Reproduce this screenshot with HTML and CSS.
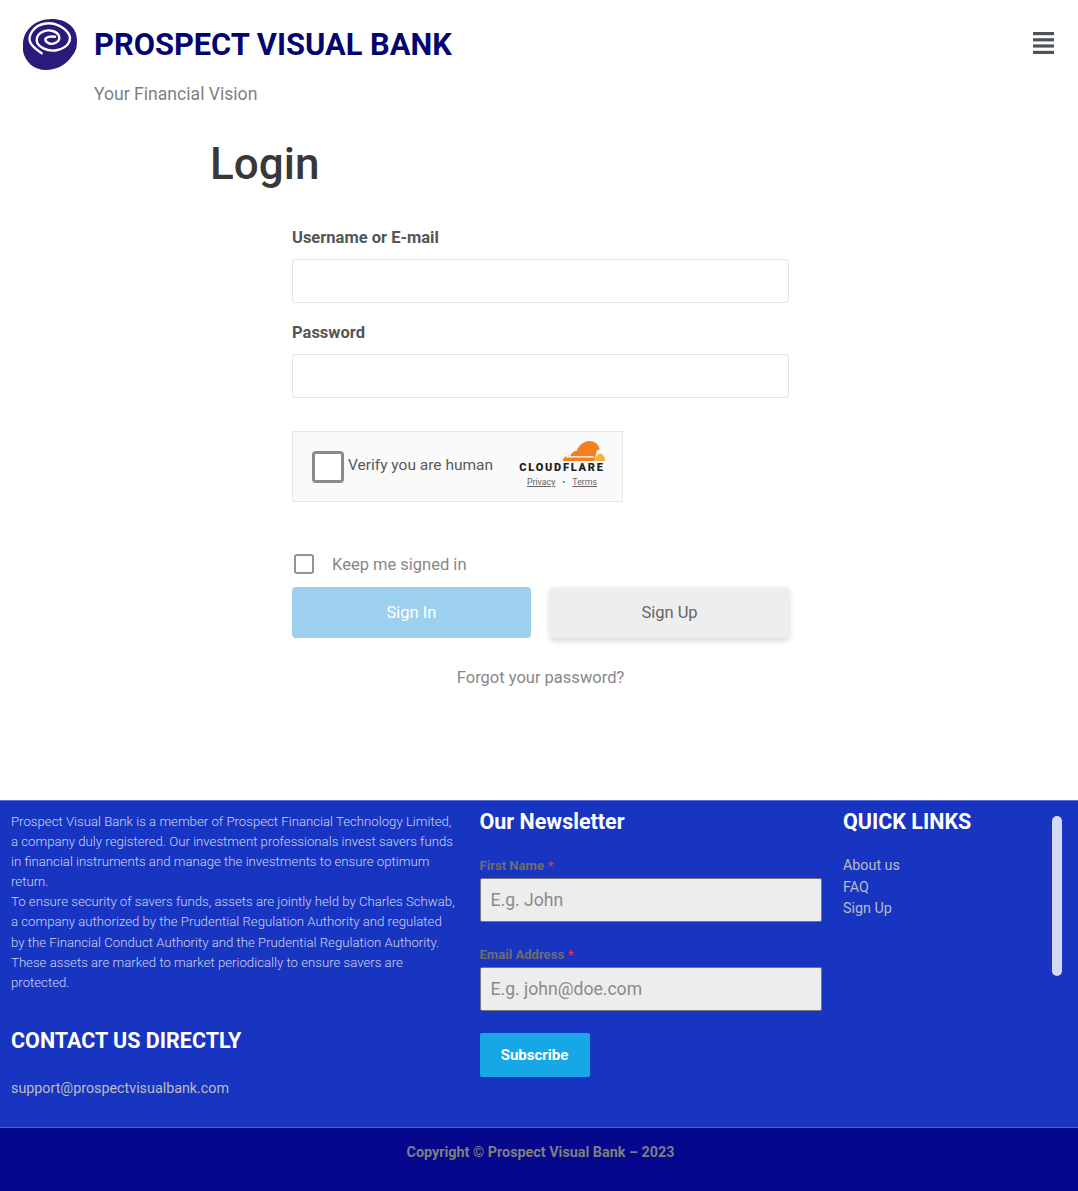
FILE: index.html
```html
<!doctype html>
<html lang="en">
<head>
  <meta charset="utf-8" />
  <meta name="viewport" content="width=device-width,initial-scale=1" />
  <title>Login - Prospect Visual Bank</title>
  <link rel="stylesheet" href="styles.css">
</head>
<body>
  <!-- Header -->
  <header class="site-header">
    <div class="brand">
      <div class="brand-row">
        <svg class="brand-logo" viewBox="0 0 56 52" aria-hidden="true">
          <path d="M1 27C1 12 13 1 30 1c15 0 25 9 25 21 0 8-1 11-5 16-6 9-16 14-26 14C12 52 3 44 1 33z" fill="#2a1a7c"/>
          <path d="M33 18.700Q26.300 18 24.200 20Q22 22 25.400 24.500Q28.700 27 33.400 24.900Q38 22.700 37.200 18.700Q36.300 14.700 30.500 13Q24.700 11.300 19.700 14.200Q14.700 17 14.700 22Q14.700 27 21.400 30.400Q28 33.700 35.500 32Q43 30.300 46.400 25.300Q49.700 20.300 46.400 15.300Q43 10.300 36.400 7.300Q29.700 4.300 22.200 5.700Q14.700 7 10.500 12.900Q6.300 18.700 8 23.700Q9.700 28.700 19.700 35.300" fill="none" stroke="#fff" stroke-width="2.400" stroke-linecap="round"/>
        </svg>
        <div class="brand-name">PROSPECT VISUAL BANK</div>
      </div>
      <div class="brand-tag">Your Financial Vision</div>
    </div>
    <svg class="menu-icon" viewBox="0 0 21 22" aria-hidden="true">
      <rect x="0" y="0" width="21" height="3.200"/>
      <rect x="0" y="6.200" width="21" height="3.200"/>
      <rect x="0" y="12.400" width="21" height="3.200"/>
      <rect x="0" y="18.800" width="21" height="3.200"/>
    </svg>
  </header>

  <!-- Login -->
  <main class="login">
    <h1>Login</h1>
    <form class="login-form">
      <label class="field-label" for="user">Username or E-mail</label>
      <input class="field" type="text" id="user">
      <label class="field-label" for="pass">Password</label>
      <input class="field" type="password" id="pass">

      <div class="turnstile">
        <span class="ts-box"></span>
        <span class="ts-text">Verify you are human</span>
        <div class="ts-brand">
          <svg class="ts-cloud" viewBox="0 0 40 20" aria-hidden="true">
            <path d="M0 19c0-3 2-5 5-5 1 0 2 0 2 .5C8 11 11 9 13 9.500 15 4 20 0 25 0c5 0 9 3 10 8-1 0-3 1-3 2L30 19z" fill="#f38020"/>
            <path d="M30 19c.5-3 2-6 5-7 3 0 5 3 5 7z" fill="#faae40"/>
            <path d="M2 14.500h27l1 1.200H3z" fill="#fff"/>
          </svg>
          <div class="ts-name">CLOUDFLARE</div>
          <div class="ts-links"><u>Privacy</u><span>•</span><u>Terms</u></div>
        </div>
      </div>

      <label class="keep"><span class="keep-box"></span>Keep me signed in</label>
      <div class="btn-row">
        <button type="button" class="btn btn-in">Sign In</button>
        <button type="button" class="btn btn-up">Sign Up</button>
      </div>
      <p class="forgot">Forgot your password?</p>
    </form>
  </main>

  <!-- Footer -->
  <footer class="site-footer">
    <div class="foot-main">
      <div class="foot-about">
        <p>Prospect Visual Bank is a member of Prospect Financial Technology Limited, a company duly registered. Our investment professionals invest savers funds in financial instruments and manage the investments to ensure optimum return.<br>To ensure security of savers funds, assets are jointly held by Charles Schwab, a company authorized by the Prudential Regulation Authority and regulated by the Financial Conduct Authority and the Prudential Regulation Authority. These assets are marked to market periodically to ensure savers are protected.</p>
        <h3>CONTACT US DIRECTLY</h3>
        <a class="foot-link" href="#">support@prospectvisualbank.com</a>
      </div>
      <form class="foot-news">
        <h3>Our Newsletter</h3>
        <label for="fname">First Name <em>*</em></label>
        <input type="text" id="fname" placeholder="E.g. John">
        <label for="femail">Email Address <em>*</em></label>
        <input type="text" id="femail" placeholder="E.g. john@doe.com">
        <button type="button" class="subscribe">Subscribe</button>
      </form>
      <div class="foot-quick">
        <h3>QUICK LINKS</h3>
        <ul>
          <li><a class="foot-link" href="#">About us</a></li>
          <li><a class="foot-link" href="#">FAQ</a></li>
          <li><a class="foot-link" href="#">Sign Up</a></li>
        </ul>
      </div>
      <div class="foot-scroll"></div>
    </div>
    <div class="foot-copy">Copyright © Prospect Visual Bank – 2023</div>
  </footer>
</body>
</html>
```

FILE: styles.css
```css
html, body { margin:0; padding:0; }
body { font-family:Roboto, sans-serif; color:#7a7a7a; background:#fff; }
* { box-sizing:border-box; }

/* Header */
.site-header { display:flex; justify-content:space-between; align-items:flex-start; padding:18px 24px 0 22px; height:120px; }
.brand-row { display:flex; align-items:center; gap:16px; height:52px; }
.brand-logo { width:56px; height:52px; display:block; }
.brand-name { font-size:30.850px; font-weight:700; color:#05056f; white-space:nowrap; }
.brand-tag { font-size:17.600px; line-height:21px; margin:14px 0 0 72px; color:#7f7f7f; }
.menu-icon { width:21px; height:22px; margin-top:14px; fill:#4f5358; display:block; }

/* Login */
.login { height:680px; padding:0 0 0 210px; }
.login h1 { margin:0; font-size:44px; font-weight:500; line-height:52px; color:#383838; padding-top:18px; }
.login-form { width:497px; margin:38px 0 0 82px; }
.field-label { display:block; font-size:16.500px; font-weight:700; line-height:19px; color:#555; margin-bottom:12px; }
.field { display:block; width:100%; height:44px; border:1px solid #e3e3e3; border-radius:3px; margin-bottom:20px; background:#fff; }

.turnstile { width:331px; height:71px; margin-top:33px; background:#fafafa; border:1px solid #e6e6e6; display:flex; align-items:center; padding:0 17px 0 19px; }
.ts-box { width:32px; height:32px; border:3px solid #8a8a8a; border-radius:4px; background:#fff; flex:none; }
.ts-text { font-size:15.500px; color:#595959; margin-left:4px; margin-bottom:3px; white-space:nowrap; }
.ts-brand { margin-left:auto; margin-bottom:4px; width:86px; display:flex; flex-direction:column; align-items:center; flex:none; }
.ts-cloud { width:42px; height:21px; align-self:flex-end; }
.ts-name { font-size:11px; font-weight:900; letter-spacing:1.750px; color:#222; line-height:12px; white-space:nowrap; }
.ts-links { font-size:8.800px; color:#666; line-height:11px; margin-top:3px; display:flex; gap:7px; }

.keep { display:flex; align-items:center; font-size:16.500px; line-height:20px; color:#878787; margin-top:53px; }
.keep-box { width:20px; height:20px; border:2px solid #949494; border-radius:3px; margin:-2px 18px 0 2px; flex:none; }
.btn-row { display:flex; gap:19px; margin-top:12px; }
.btn { flex:1; height:51px; border:none; border-radius:4px; font:400 16.500px Roboto, sans-serif; }
.btn-in { background:#9dd0ef; color:#fff; }
.btn-up { background:#eee; color:#666; box-shadow:0 3px 6px rgba(0,0,0,0.16); }
.forgot { margin:30px 0 0; text-align:center; font-size:16.500px; line-height:20px; color:#878787; }

/* Footer */
.site-footer { background:#1835c1; border-top:1px solid #5f70d6; }
.foot-main { display:flex; height:326px; position:relative; padding:0 0 0 11px; }
.foot-about { width:447px; margin-right:21.500px; flex:none; }
.foot-about p { margin:11px 0 0; font-size:13.200px; font-weight:300; line-height:20.100px; color:#cdd3f0; }
.foot-main h3 { margin:0; font-size:21.500px; font-weight:700; line-height:26px; color:#fff; }
.foot-about h3 { margin-top:35px; }
.foot-link { display:block; color:#bcbcc4; text-decoration:none; font-size:14.300px; line-height:21.500px; }
.foot-about .foot-link { margin-top:24px; }

.foot-news { width:342px; margin-right:21.500px; padding-top:8px; flex:none; }
.foot-news label { display:block; font-size:13.100px; font-weight:700; line-height:15px; color:#6d6d6d; }
.foot-news label:first-of-type { margin-top:23px; }
.foot-news em { color:#e2324a; font-style:normal; }
.foot-news input { display:block; width:100%; height:44px; border:1px solid #777; border-radius:2px; background:#ededed; padding:0 10px; margin:5px 0 25px; font:400 17.600px Roboto, sans-serif; }
.foot-news input::placeholder { color:#8a8a8a; }
.subscribe { display:block; width:110px; height:44px; margin-top:-3px; border:none; border-radius:2px; background:#16a8e6; color:#fff; font:700 15px Roboto, sans-serif; }

.foot-quick { padding-top:8px; }
.foot-quick ul { list-style:none; margin:20px 0 0; padding:0; }
.foot-scroll { position:absolute; left:1052px; top:15px; width:10px; height:160px; border-radius:5px; background:#d3d9f6; }

.foot-copy { background:#05078c; border-top:1px solid #4e62cf; height:64px; padding-top:16px; padding-left:3px; text-align:center; font-size:14.350px; font-weight:700; line-height:18px; color:#7f7f7f; }
```
